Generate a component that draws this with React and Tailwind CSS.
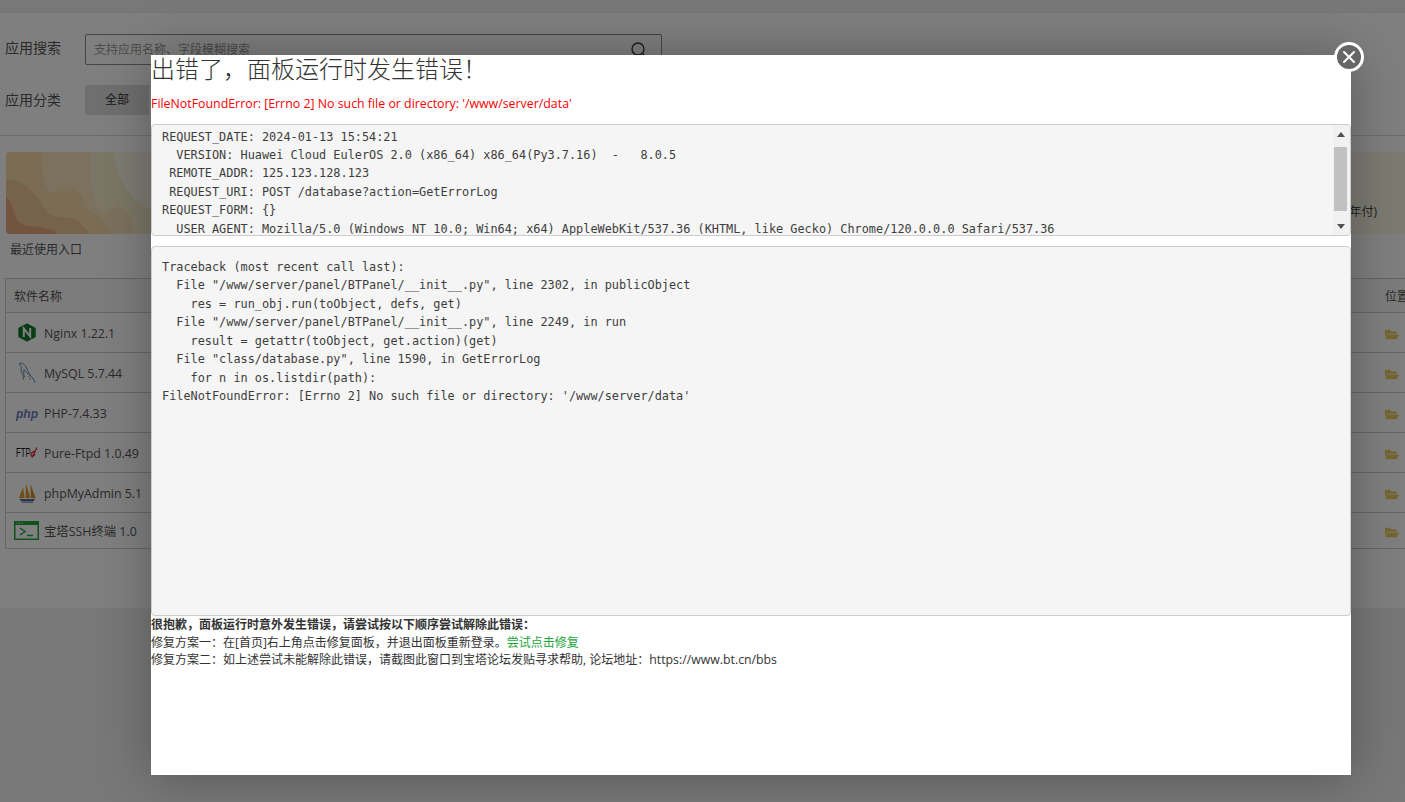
import React from 'react';
import { FaFolderOpen } from 'react-icons/fa';

const sans = 'font-["Open_Sans","Noto_Sans_CJK_SC",sans-serif]';

const NginxIcon = () => (
  <svg width="18" height="19" viewBox="0 0 18 19">
    <path d="M9 1 L17 5.4 V13.6 L9 18 L1 13.6 V5.4 Z" fill="#0f7a2c" stroke="#0f7a2c" strokeWidth="1.4" strokeLinejoin="round" />
    <path d="M5.8 14 V5.6 L12.2 13.4 V5" fill="none" stroke="#fff" strokeWidth="2" />
  </svg>
);

const MysqlIcon = () => (
  <svg width="18" height="22" viewBox="0 0 18 22" fill="none">
    <path d="M1 1.5 C4 0.5 7 2.5 8.5 6 C9.5 9 11 11.5 12.5 13.5 C10 12.5 7.5 10 6 7.5 C5.5 10.5 5.5 12 6.5 15 C3.5 12 2.5 8 3.5 4.5 C2.5 3.5 1.7 2.5 1 1.5 Z" stroke="#4f83a6" strokeWidth="0.9" />
    <path d="M12 13.5 C14 15 16 17.5 17 20.5" stroke="#3f7c9e" strokeWidth="1" />
    <path d="M10.5 14 C11.5 15.5 12 16.5 12 18" stroke="#b68d5c" strokeWidth="0.8" />
    <path d="M5 14.5 L5.5 17.5" stroke="#4f83a6" strokeWidth="0.9" />
  </svg>
);

const PhpIcon = () => (
  <span className='pt-[3px] font-["Liberation_Sans",sans-serif] text-[12px] font-bold italic leading-none text-[#6c80bb]'>php</span>
);

const FtpIcon = () => (
  <span className="flex items-center">
    <span className='inline-block w-[14px] origin-left scale-x-[0.65] font-["Liberation_Sans",sans-serif] text-[12px] leading-none text-[#111]'>FTP</span>
    <svg width="8" height="11" viewBox="0 0 8 11" fill="none">
      <path d="M7 0.5 L2 10.5 M5.5 5 C3 4 1 6 1 8 C1 10 3.5 9.5 5 7" stroke="#d92b2b" strokeWidth="1.3" />
    </svg>
  </span>
);

const PmaIcon = () => (
  <svg width="18" height="20" viewBox="0 0 18 20">
    <path d="M5 4 L1 15 H6.5 Z" fill="#e09a26" />
    <path d="M8 0.5 L7.5 15 H12.5 Z" fill="#e09a26" />
    <path d="M12.5 1 L13 15 H17.5 Z" fill="#cf8a1e" />
    <path d="M1 16 H17.5 L15 18.5 H3.5 Z" fill="#5a6a9c" />
    <path d="M3.5 19.5 H15" stroke="#9aa5c4" strokeWidth="1" />
  </svg>
);

const SshIcon = () => (
  <svg className="-ml-px" width="25" height="19" viewBox="0 0 25 19" fill="none">
    <rect x="0.75" y="0.75" width="23.5" height="17.5" fill="#fff" stroke="#20a53a" strokeWidth="1.5" />
    <rect x="0.5" y="0.5" width="24" height="3.5" fill="#20a53a" />
    <path d="M2.5 2 H3.5 M5 2 H6 M7.5 2 H8.5" stroke="#fff" strokeWidth="1" />
    <path d="M6 7 L11 10.5 L6 14" stroke="#20a53a" strokeWidth="1.5" />
    <path d="M13 14.5 H19" stroke="#20a53a" strokeWidth="1.5" />
  </svg>
);

const softwares = [
  { name: 'Nginx 1.22.1', icon: <NginxIcon />, h: 'h-10' },
  { name: 'MySQL 5.7.44', icon: <MysqlIcon />, h: 'h-10' },
  { name: 'PHP-7.4.33', icon: <PhpIcon />, h: 'h-10' },
  { name: 'Pure-Ftpd 1.0.49', icon: <FtpIcon />, h: 'h-10' },
  { name: 'phpMyAdmin 5.1', icon: <PmaIcon />, h: 'h-10' },
  { name: '宝塔SSH终端 1.0', icon: <SshIcon />, h: 'h-9' },
];

const requestInfo = `REQUEST_DATE: 2024-01-13 15:54:21
  VERSION: Huawei Cloud EulerOS 2.0 (x86_64) x86_64(Py3.7.16)  -   8.0.5
 REMOTE_ADDR: 125.123.128.123
 REQUEST_URI: POST /database?action=GetErrorLog
REQUEST_FORM: {}
  USER_AGENT: Mozilla/5.0 (Windows NT 10.0; Win64; x64) AppleWebKit/537.36 (KHTML, like Gecko) Chrome/120.0.0.0 Safari/537.36`;

const traceback = `Traceback (most recent call last):
  File "/www/server/panel/BTPanel/__init__.py", line 2302, in publicObject
    res = run_obj.run(toObject, defs, get)
  File "/www/server/panel/BTPanel/__init__.py", line 2249, in run
    result = getattr(toObject, get.action)(get)
  File "class/database.py", line 1590, in GetErrorLog
    for n in os.listdir(path):
FileNotFoundError: [Errno 2] No such file or directory: '/www/server/data'`;

const pre = 'font-["DejaVu_Sans_Mono",monospace] text-[11.87px] leading-[18.45px] text-[#3d3d3d] whitespace-pre';

export default function App() {
  return (
    <div className={`relative h-[802px] w-full overflow-hidden bg-[#f0f0f0] ${sans}`}>
      {/* page behind the dialog */}
      <div className="mt-[13px] h-[595px] bg-white pt-[21px]">
        <div className="flex items-center pl-[5px]">
          <span className="w-20 pb-[3px] text-sm leading-[26px] text-[#555]">应用搜索</span>
          <div className="flex h-[31px] w-[577px] items-center justify-between rounded-[2px] border border-[#8c8c8c] pl-2 pr-[13px]">
            <span className="text-xs text-[#999]">支持应用名称、字段模糊搜索</span>
            <svg width="18" height="18" viewBox="0 0 18 18" fill="none" stroke="#333" strokeWidth="1.3">
              <circle cx="8" cy="8" r="6" />
              <path d="M12.5 12.5 L16.5 16.5" />
            </svg>
          </div>
        </div>
        <div className="mt-5 flex items-center pl-[5px]">
          <span className="w-20 text-sm text-[#555]">应用分类</span>
          <span className="flex h-[30px] w-16 items-center justify-center bg-[#dedede] text-xs text-[#333]">全部</span>
        </div>
        <div className="mt-5 border-t border-[#ddd]" />
        <div className="relative ml-1.5 mt-4 flex h-[82px] items-end justify-end overflow-hidden rounded-l-[4px] bg-[#f9f9e6] pb-[14px] pr-[28px]">
          <svg className="absolute left-0 top-0" width="150" height="82" viewBox="0 0 150 82">
            <path d="M0 0 H107 C112 28 122 48 150 60 V82 H0 Z" fill="#f6eccb" />
            <path d="M0 0 H85 C84 20 84 45 94 60 C102 62 110 52 117 56 C124 60 127 68 127 82 H0 Z" fill="#f6e2ba" />
            <path d="M0 0 H36 C38 12 34 30 44 40 C52 42 64 34 71 38 C78 44 78 56 85 60 C95 64 100 72 104 82 H0 Z" fill="#f4d9ab" />
            <path d="M0 28 C14 26 26 38 31 45 C38 55 40 62 48 64 C58 66 66 64 71 68 C77 72 80 78 84 82 H0 Z" fill="#eec497" />
            <path d="M0 45 C5 48 7 58 10 66 C13 74 24 74 34 75 C42 76 48 78 52 82 H0 Z" fill="#e5a87f" />
          </svg>
          <span className="relative text-xs text-[#444]">(年付)</span>
        </div>
        <p className="ml-2.5 mt-[9px] text-xs leading-[14px] text-[#555]">最近使用入口</p>
        <div className="ml-[5px] mt-[21px] border-l border-[#ccc] text-[12.37px] text-[#555]">
          <div className="flex h-[35px] items-center justify-between border-y border-[#ccc] bg-[#f8f8f8] pl-2 pt-[2px]">
            <span className="text-xs">软件名称</span>
            <span className="w-5 overflow-visible whitespace-nowrap text-xs">位置</span>
          </div>
          {softwares.map((s) => (
            <div key={s.name} className={`flex items-center justify-between border-b border-[#ccc] ${s.h}`}>
              <div className="flex items-center">
                <span className="flex w-[38px] shrink-0 justify-center pl-1">{s.icon}</span>
                <span className="pt-[3px]">{s.name}</span>
              </div>
              <FaFolderOpen className="mr-[6px] mt-[3px] h-[15px] w-[14px] text-[#e9cc5f]" />
            </div>
          ))}
        </div>
      </div>

      {/* layer shade */}
      <div className="absolute inset-0 bg-black/50" />

      {/* error dialog */}
      <div className="absolute left-[151px] top-[55px] h-[720px] w-[1200px] bg-white shadow-[1px_1px_50px_rgba(0,0,0,0.3)]">
        <h1 className="text-[24px] font-light leading-[28px] text-[#333]">出错了，面板运行时发生错误！</h1>
        <p className="mt-[12px] text-[12.37px] leading-[17px] text-[#f00]">FileNotFoundError: [Errno 2] No such file or directory: '/www/server/data'</p>
        <div className="mt-[12px] flex h-[112px] w-full overflow-hidden rounded-[4px] border border-[#ccc] bg-[#f5f5f5]">
          <div className={`flex-1 overflow-hidden pl-[10px] pt-[2.5px] ${pre}`}>{requestInfo}</div>
          <div className="flex w-[17px] shrink-0 flex-col items-center bg-[#f1f1f1] pr-[2px]">
            <span className="mt-[7px] h-0 w-0 border-x-[4px] border-b-[5px] border-x-transparent border-b-[#505050]" />
            <span className="mt-[10px] h-[64px] w-[13px] bg-[#c1c1c1]" />
            <span className="mt-[13px] h-0 w-0 border-x-[4px] border-t-[5px] border-x-transparent border-t-[#505050]" />
          </div>
        </div>
        <div className={`mt-[10px] h-[370px] w-full rounded-[4px] border border-[#ccc] bg-[#f5f5f5] pl-[10px] pt-[11px] ${pre}`}>{traceback}</div>
        <div className="text-xs leading-[17.5px] text-[#333]">
          <p className="font-bold">很抱歉，面板运行时意外发生错误，请尝试按以下顺序尝试解除此错误：</p>
          <p>修复方案一：在[首页]右上角点击修复面板，并退出面板重新登录。<span className="text-[#20a53a]">尝试点击修复</span></p>
          <p>修复方案二：如上述尝试未能解除此错误，请截图此窗口到宝塔论坛发贴寻求帮助, 论坛地址：<span className="text-[12.3px]">https://www.bt.cn/bbs</span></p>
        </div>
      </div>

      {/* close button hangs off the dialog corner */}
      <div className="absolute left-[1334px] top-[42px] flex h-[30px] w-[30px] items-center justify-center rounded-full border-[3px] border-white bg-[#666]">
        <svg width="14" height="14" viewBox="0 0 14 14" stroke="#fff" strokeWidth="2" strokeLinecap="round">
          <path d="M2 2 L12 12 M12 2 L2 12" />
        </svg>
      </div>
    </div>
  );
}
